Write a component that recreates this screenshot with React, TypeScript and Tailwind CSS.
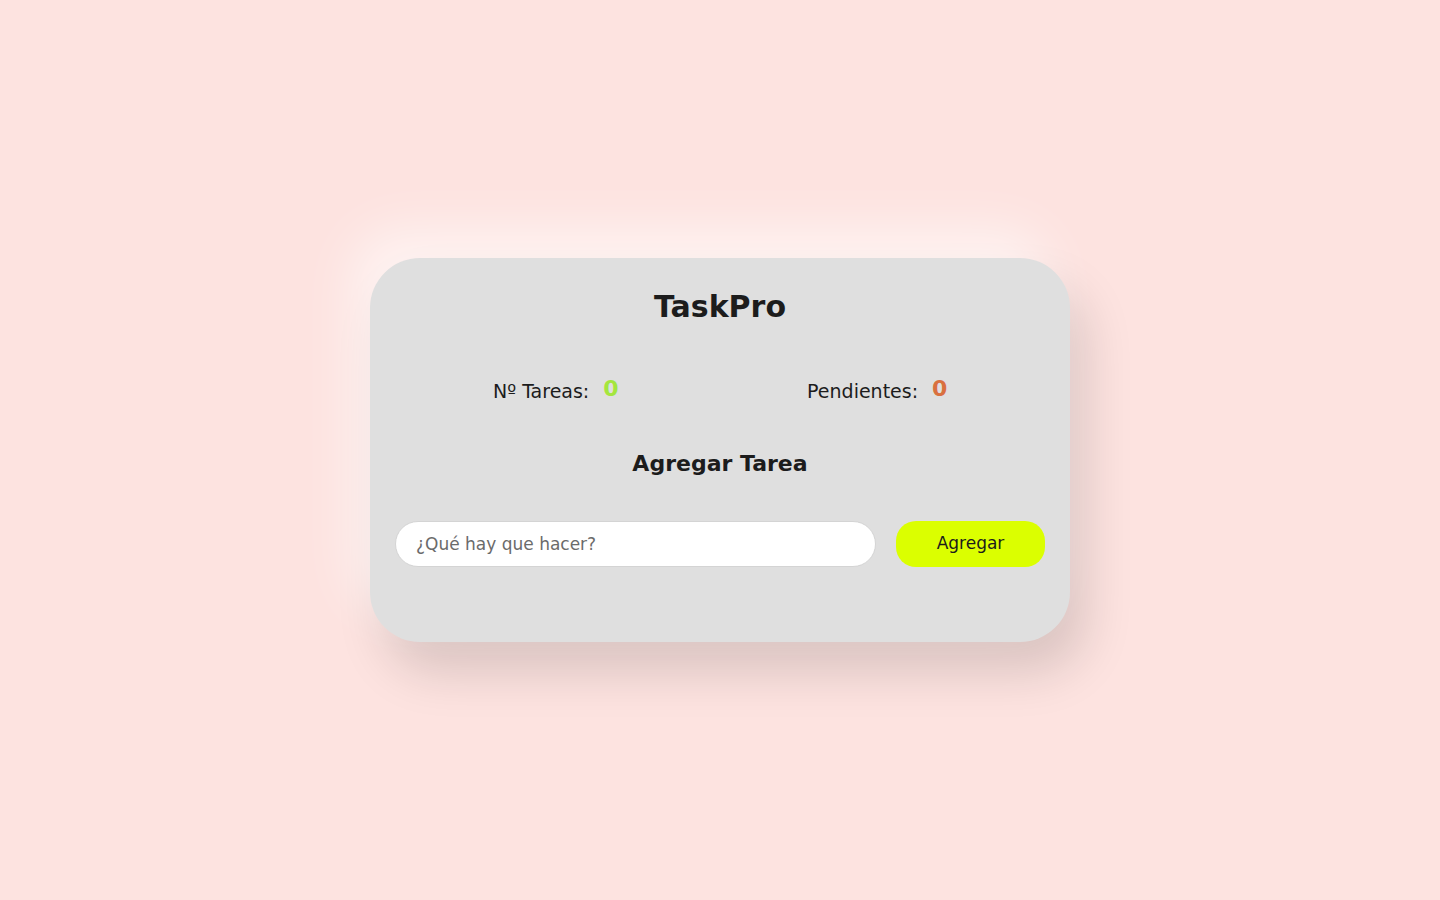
import React from 'react'

const font = { fontFamily: '"DejaVu Sans", "Noto Sans", Arial, sans-serif' }

export default function App() {
  return (
    <div className="min-h-screen w-full bg-[#fde3e0] flex items-center justify-center" style={font}>
      <div className="w-[700px] h-[384px] rounded-[50px] bg-[#dfdfdf] px-[25px] pt-[26px] shadow-[-20px_-30px_50px_rgba(255,255,255,0.55),15px_30px_50px_rgba(0,0,0,0.14)]">
        <h1 className="text-center text-[30px] leading-[45px] font-bold text-[#1c1c1c]">TaskPro</h1>

        <div className="grid grid-cols-2 mt-[47px] pr-[7px]">
          <div className="flex items-center justify-center gap-[14px]">
            <span className="text-[19px] leading-[30px] text-[#1c1c1c]">Nº Tareas:</span>
            <span className="text-[22px] leading-[30px] font-bold text-[#a4e63e] -translate-y-[2px]">0</span>
          </div>
          <div className="flex items-center justify-center gap-[14px]">
            <span className="text-[19px] leading-[30px] text-[#1c1c1c]">Pendientes:</span>
            <span className="text-[22px] leading-[30px] font-bold text-[#d9703f] -translate-y-[2px]">0</span>
          </div>
        </div>

        <h2 className="text-center text-[22px] leading-[33px] font-bold text-[#1c1c1c] mt-[41px]">Agregar Tarea</h2>

        <div className="flex items-center gap-[20px] mt-[41px]">
          <input
            type="text"
            placeholder="¿Qué hay que hacer?"
            className="flex-1 h-[46px] rounded-full bg-white px-[20px] text-[17px] text-[#333] placeholder:text-[#6b6b6b] outline-none border border-[#d4d4d4]"
            style={font}
          />
          <button className="w-[149px] h-[46px] rounded-[20px] bg-[#dbff00] text-[17px] text-[#1c1c1c]" style={font}>
            Agregar
          </button>
        </div>
      </div>
    </div>
  )
}
